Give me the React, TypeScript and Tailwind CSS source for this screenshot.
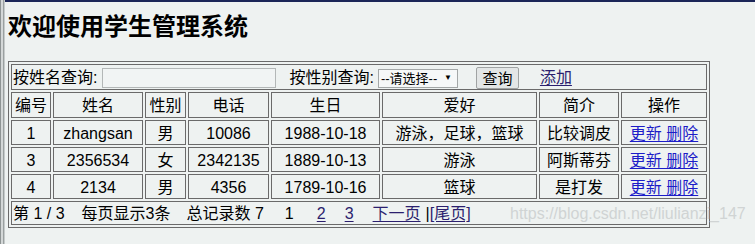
import React from "react";

interface Student {
  id: number;
  name: string;
  gender: string;
  phone: string;
  birthday: string;
  hobby: string;
  intro: string;
}

const students: Student[] = [
  { id: 1, name: "zhangsan", gender: "男", phone: "10086", birthday: "1988-10-18", hobby: "游泳，足球，篮球", intro: "比较调皮" },
  { id: 3, name: "2356534", gender: "女", phone: "2342135", birthday: "1889-10-13", hobby: "游泳", intro: "阿斯蒂芬" },
  { id: 4, name: "2134", gender: "男", phone: "4356", birthday: "1789-10-16", hobby: "篮球", intro: "是打发" },
];

const headers = ["编号", "姓名", "性别", "电话", "生日", "爱好", "简介", "操作"];

const cell = "border border-[#6a6a6a] p-0 pt-[2px] text-center font-normal whitespace-nowrap";

const App: React.FC = () => {
  return (
    <div className="relative flex h-[244px] w-[755px] overflow-hidden bg-[#eef2f1] font-['Liberation_Sans','Noto_Sans_CJK_SC',sans-serif] text-[16px] leading-[20px] text-black">
      {/* window edge */}
      <div className="flex w-[5px] shrink-0">
        <div className="w-[1px] bg-[#8e9494]" />
        <div className="w-[2px] bg-[#d4d8d8]" />
        <div className="w-[1px] bg-[#9aa0a0]" />
        <div className="w-[1px] bg-[#c6cbcb]" />
      </div>

      <div className="flex flex-1 flex-col">
        <div className="h-[2px] bg-[#1b2658]" />
        <h1 className="ml-[3px] mt-[9px] text-[24px] font-bold leading-[32px]">欢迎使用学生管理系统</h1>

        <table className="ml-[3px] mt-[18px] w-[702px] table-fixed border-separate border-spacing-[2px] border border-[#6a6a6a]">
          <colgroup>
            <col className="w-[40px]" />
            <col className="w-[90px]" />
            <col className="w-[41px]" />
            <col className="w-[81px]" />
            <col className="w-[109px]" />
            <col className="w-[155px]" />
            <col className="w-[80px]" />
            <col className="w-[86px]" />
          </colgroup>
          <thead>
            <tr className="h-[26px]">
              <td colSpan={8} className="border border-[#6a6a6a] p-0 pt-[2px]">
                <div className="flex items-center pl-[1px]">
                  <span>按姓名查询:</span>
                  <input className="ml-[5px] h-[20px] w-[174px] border border-[#b3b7b7] bg-[#f1f4f4] outline-none" />
                  <span className="ml-[13px]">按性别查询:</span>
                  <div className="ml-[4px] flex h-[19px] w-[80px] items-center justify-between border border-[#a3a7a7] bg-[#f6f8f8] pl-[2px] pr-[5px] text-[13px] leading-none">
                    <span>--请选择--</span>
                    <span className="text-[8px]">▼</span>
                  </div>
                  <button className="ml-[18px] h-[22px] w-[43px] rounded-[2px] border border-[#a0a3a3] bg-[#e3e6e6] text-[15px] leading-none">查询</button>
                  <a className="ml-[21px] text-[#2b1f6e] underline underline-offset-2">添加</a>
                </div>
              </td>
            </tr>
            <tr className="h-[26px]">
              {headers.map((h) => (
                <th key={h} className={cell}>{h}</th>
              ))}
            </tr>
          </thead>
          <tbody>
            {students.map((s) => (
              <tr key={s.id} className="h-[25px]">
                <td className={cell}>{s.id}</td>
                <td className={cell}>{s.name}</td>
                <td className={cell}>{s.gender}</td>
                <td className={cell}>{s.phone}</td>
                <td className={cell}>{s.birthday}</td>
                <td className={cell}>{s.hobby}</td>
                <td className={cell}>{s.intro}</td>
                <td className={cell}>
                  <a className="text-[#1c1cc8] underline underline-offset-2">更新 删除</a>
                </td>
              </tr>
            ))}
            <tr className="h-[24px]">
              <td colSpan={8} className="border border-[#6a6a6a] p-0 pt-[2px]">
                <div className="flex items-center pl-[1px]">
                  <span>第 1 / 3</span>
                  <span className="ml-[17px]">每页显示3条</span>
                  <span className="ml-[16px]">总记录数 7</span>
                  <span className="ml-[21px]">1</span>
                  <a className="ml-[23px] text-[#2b1f6e] underline underline-offset-2">2</a>
                  <a className="ml-[19px] text-[#2b1f6e] underline underline-offset-2">3</a>
                  <a className="ml-[19px] text-[#2b1f6e] underline underline-offset-2">下一页</a>
                  <span className="ml-[5px]">|</span>
                  <a className="text-[#2b1f6e] underline underline-offset-2">[尾页]</a>
                </div>
              </td>
            </tr>
          </tbody>
        </table>
      </div>

      <div className="pointer-events-none absolute left-[510px] top-[204px] text-[16px] leading-[20px] text-[#d0d4d4]">
        https://blog.csdn.net/liulianzi_147
      </div>
    </div>
  );
};

export default App;
